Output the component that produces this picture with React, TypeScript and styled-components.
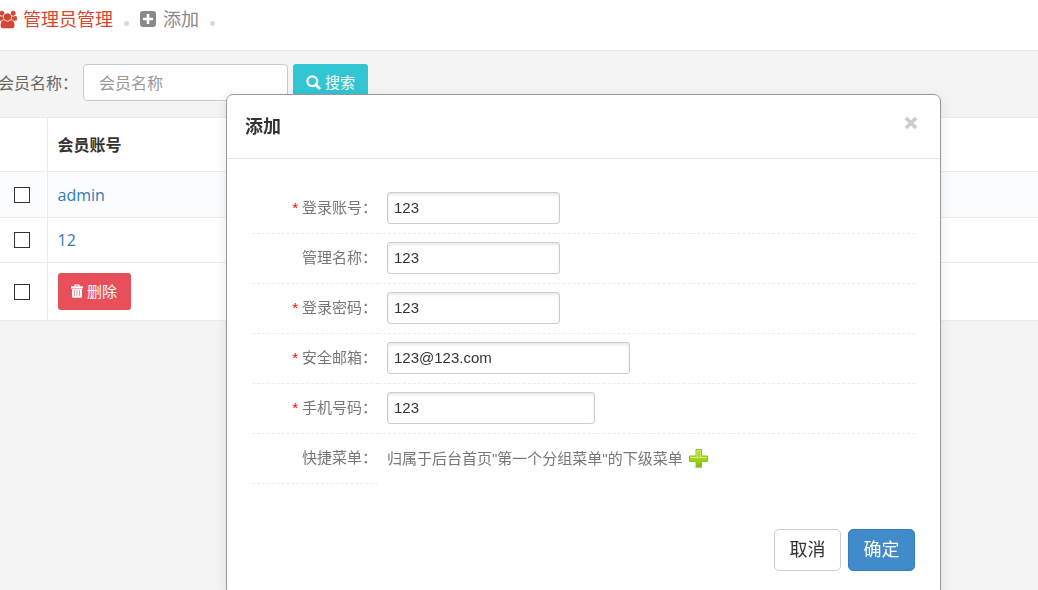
import React from 'react';
import styled, { createGlobalStyle } from 'styled-components';

const GlobalStyle = createGlobalStyle`
  *, *::before, *::after { box-sizing: border-box; }
  html, body { margin: 0; overflow: hidden; }
  body {
    background: #f4f4f4;
    color: #666;
    font: 16px/24px 'Open Sans', 'Noto Sans CJK SC', sans-serif;
  }
  button, input { font: inherit; margin: 0; }
`;

const Page = styled.div`
  margin-left: -2px;
`;

const TopBar = styled.nav`
  display: flex;
  align-items: center;
  height: 51px;
  padding-bottom: 12px;
  background: #fff;
  border-bottom: 1px solid #e3e9ee;
  font-size: 18px;
`;

const Crumb = styled.a`
  display: flex;
  align-items: center;
  gap: 7px;
  color: #888;
  text-decoration: none;
  &[aria-current] {
    gap: 6px;
    color: #d64635;
  }
`;

const Dot = styled.i`
  width: 5px;
  height: 5px;
  margin: 8px 11px 0;
  border-radius: 50%;
  background: #d9d9d9;
`;

const SearchBar = styled.form`
  display: flex;
  align-items: center;
  height: 66px;
  padding-bottom: 3px;
`;

const SearchInput = styled.input`
  width: 205px;
  height: 37px;
  margin: 0 5px;
  padding: 0 15px;
  border: 1px solid #c2cad8;
  border-radius: 4px;
  background: #fff;
  color: #555;
  &::placeholder { color: #999; opacity: 1; }
`;

const ActionButton = styled.button<{ $color: string }>`
  display: inline-flex;
  align-items: center;
  justify-content: center;
  gap: 4px;
  width: 75px;
  height: 37px;
  padding: 0 0 1px;
  border: 0;
  border-radius: 3px;
  background: ${(p) => p.$color};
  color: #fff;
  font-size: 15px;
`;

const DeleteButton = styled(ActionButton)`
  width: 73px;
`;

const Grid = styled.table`
  width: 100%;
  border-collapse: collapse;
  background: #fff;
  border-top: 1px solid #e7ecf1;
`;

const Row = styled.tr<{ $h: number; $tint?: boolean }>`
  height: ${(p) => p.$h}px;
  background: ${(p) => (p.$tint ? '#fbfcfd' : '#fff')};
  th, td {
    padding: 0 10px;
    border-bottom: 1px solid #e7ecf1;
    text-align: left;
    vertical-align: middle;
  }
  th { color: #333; font-weight: 700; }
  > :first-child {
    width: 49px;
    padding: 0 0 0 16px;
    border-right: 1px solid #e7ecf1;
  }
`;

const Tick = styled.input`
  display: block;
  appearance: none;
  width: 16px;
  height: 16px;
  border: 1px solid #333;
  background: #fff;
`;

const CellLink = styled.a`
  color: #337ab7;
  text-decoration: none;
`;

const Dialog = styled.section`
  position: fixed;
  top: 94px;
  left: 226px;
  right: 97px;
  padding-bottom: 24px;
  background: #fff;
  border: 1px solid #999;
  border-radius: 7px;
  box-shadow: 0 3px 12px rgba(0, 0, 0, 0.1);
  font-family: 'Liberation Sans', 'Noto Sans CJK SC', sans-serif;
`;

const DialogHead = styled.header`
  display: flex;
  align-items: center;
  justify-content: space-between;
  height: 64px;
  padding: 0 22px 0 18px;
  border-bottom: 1px solid #e5e5e5;
`;

const DialogTitle = styled.h4`
  margin: 0;
  color: #333;
  font-size: 18px;
  font-weight: 700;
`;

const CloseButton = styled.button`
  display: flex;
  padding: 0 0 7px;
  border: 0;
  background: none;
  color: #ccc;
`;

const Fields = styled.div`
  padding: 25px 25px 0;
  color: #777;
  font-size: 15px;
`;

const Field = styled.div`
  display: flex;
  height: 50px;
`;

const FieldLabel = styled.label`
  flex: 0 0 126px;
  display: flex;
  align-items: center;
  justify-content: flex-end;
  padding: 0 1px 2px 0;
  border-bottom: 1px dashed #ececec;
`;

const Star = styled.span`
  margin-right: 4px;
  color: #f00;
`;

const FieldBody = styled.div<{ $plain?: boolean }>`
  flex: 1;
  display: flex;
  align-items: center;
  gap: 6px;
  padding: 0 0 ${(p) => (p.$plain ? 0 : 2)}px 9px;
  border-bottom: ${(p) => (p.$plain ? '0' : '1px dashed #ececec')};
`;

const TextInput = styled.input<{ $w: number }>`
  width: ${(p) => p.$w}px;
  height: 32px;
  padding: 0 6px;
  border: 1px solid #ccc;
  border-radius: 3px;
  background: #fff;
  color: #333;
  box-shadow: inset 0 2px 3px rgba(0, 0, 0, 0.09);
`;

const PlusButton = styled.button`
  display: flex;
  padding: 0;
  border: 0;
  background: none;
`;

const DialogFoot = styled.footer`
  display: flex;
  justify-content: flex-end;
  gap: 7px;
  padding: 45px 25px 0;
`;

const FootButton = styled.button<{ $primary?: boolean }>`
  width: 67px;
  height: 42px;
  padding: 0;
  border: 1px solid ${(p) => (p.$primary ? '#357ebd' : '#ccc')};
  border-radius: 5px;
  background: ${(p) => (p.$primary ? '#428bca' : '#fff')};
  color: ${(p) => (p.$primary ? '#fff' : '#333')};
  font-size: 18px;
`;

const UsersIcon = () => (
  <svg width="19" height="19" viewBox="0 0 1920 1792" fill="currentColor" aria-hidden="true">
    <path d="M593 896q-162 5-265 128H194q-82 0-138-40.500T0 865q0-353 124-353 6 0 43.500 21t97.500 42.500T384 597q67 0 133-23-5 37-5 66 0 139 81 256zm1071 637q0 120-73 189.500t-194 69.500H523q-121 0-194-69.500T256 1533q0-53 3.500-103.500t14-109T300 1212t43-97.500 62-81 85.500-53.500T602 960q10 0 43 21.500t73 48 107 48 135 21.500 135-21.500 107-48 73-48 43-21.500q61 0 111.500 20t85.500 53.500 62 81 43 97.500 26.500 108.500 14 109 3.500 103.500zM640 256q0 106-75 181t-181 75-181-75-75-181 75-181T384 0t181 75 75 181zm704 384q0 159-112.500 271.500T960 1024 688.500 911.500 576 640t112.500-271.500T960 256t271.500 112.500T1344 640zm576 225q0 78-56 118.500t-138 40.500h-134q-103-123-265-128 81-117 81-256 0-29-5-66 66 23 133 23 59 0 119-21.500t97.500-42.500 43.500-21q124 0 124 353zm-128-609q0 106-75 181t-181 75-181-75-75-181 75-181 181-75 181 75 75 181z" />
  </svg>
);

const PlusSquareIcon = () => (
  <svg width="16" height="16" viewBox="0 0 16 16" aria-hidden="true">
    <rect width="16" height="16" rx="3" fill="currentColor" />
    <path d="M8 3v10M3 8h10" stroke="#fff" strokeWidth="2.600" />
  </svg>
);

const SearchIcon = () => (
  <svg width="15" height="15" viewBox="0 0 15 15" fill="none" stroke="currentColor" strokeWidth="2.300" aria-hidden="true">
    <circle cx="6.300" cy="6.300" r="4.900" />
    <path d="M9.800 9.800l3.500 3.500" strokeWidth="2.800" strokeLinecap="round" />
  </svg>
);

const TrashIcon = () => (
  <svg width="12" height="14" viewBox="0 0 12 14" aria-hidden="true">
    <path d="M4 2.500V1h4v1.500" fill="none" stroke="#fff" strokeWidth="1.200" />
    <path d="M0 3.200q0-1 1-1h10q1 0 1 1v1.200H0zM1 5h10v7.500q0 1.200-1.200 1.200H2.200Q1 13.700 1 12.500z" fill="#fff" />
    <path d="M3.500 6v6M6 6v6M8.500 6v6" stroke="#f0979d" strokeWidth="1" />
  </svg>
);

const CloseIcon = () => (
  <svg width="14" height="14" viewBox="0 0 14 14" stroke="currentColor" strokeWidth="3.800" aria-hidden="true">
    <path d="M2 2l10 10M12 2L2 12" />
  </svg>
);

const GreenPlusIcon = () => (
  <svg width="20" height="20" viewBox="0 0 20 20" aria-hidden="true">
    <defs>
      <linearGradient id="leaf" x1="0" y1="0" x2="0" y2="1">
        <stop offset="0" stopColor="#b5de3c" />
        <stop offset="0.550" stopColor="#a0d911" />
        <stop offset="1" stopColor="#7fb80e" />
      </linearGradient>
    </defs>
    <ellipse cx="9.500" cy="18.500" rx="5" ry="0.700" fill="#ddd" />
    <path d="M7 .500h5.500V7h6v5.500h-6v5.500H7v-5.500H.500V7H7z" fill="url(#leaf)" stroke="#8fc02a" />
    <path d="M8 8V1.500h3.500V8" fill="none" stroke="#c8e96a" />
    <path d="M1.500 8.500h16" stroke="#d3f07c" />
  </svg>
);

const accounts = [
  { name: 'admin', height: 46, tint: true },
  { name: '12', height: 45, tint: false },
];

const fields = [
  { id: 'account', label: '登录账号：', value: '123', width: 173, required: true },
  { id: 'name', label: '管理名称：', value: '123', width: 173, required: false },
  { id: 'password', label: '登录密码：', value: '123', width: 173, required: true },
  { id: 'email', label: '安全邮箱：', value: '123@123.com', width: 243, required: true },
  { id: 'phone', label: '手机号码：', value: '123', width: 208, required: true },
];

export default function App() {
  return (
    <>
      <GlobalStyle />
      <Page>
        <TopBar>
          <Crumb href="#admins" aria-current="page">
            <UsersIcon />
            管理员管理
          </Crumb>
          <Dot />
          <Crumb href="#add">
            <PlusSquareIcon />
            添加
          </Crumb>
          <Dot />
        </TopBar>
        <SearchBar onSubmit={(e) => e.preventDefault()}>
          <label htmlFor="member">会员名称：</label>
          <SearchInput id="member" placeholder="会员名称" />
          <ActionButton $color="#32c5d2">
            <SearchIcon />
            搜索
          </ActionButton>
        </SearchBar>
        <Grid>
          <thead>
            <Row $h={54}>
              <th />
              <th>会员账号</th>
            </Row>
          </thead>
          <tbody>
            {accounts.map((a) => (
              <Row key={a.name} $h={a.height} $tint={a.tint}>
                <td>
                  <Tick type="checkbox" aria-label={a.name} />
                </td>
                <td>
                  <CellLink href={`#${a.name}`}>{a.name}</CellLink>
                </td>
              </Row>
            ))}
            <Row $h={58}>
              <td>
                <Tick type="checkbox" aria-label="全选" />
              </td>
              <td>
                <DeleteButton type="button" $color="#e7505a">
                  <TrashIcon />
                  删除
                </DeleteButton>
              </td>
            </Row>
          </tbody>
        </Grid>
      </Page>

      <Dialog role="dialog" aria-labelledby="dialog-title">
        <DialogHead>
          <DialogTitle id="dialog-title">添加</DialogTitle>
          <CloseButton type="button" aria-label="关闭">
            <CloseIcon />
          </CloseButton>
        </DialogHead>
        <Fields>
          {fields.map((f) => (
            <Field key={f.id}>
              <FieldLabel htmlFor={f.id}>
                {f.required && <Star>*</Star>}
                {f.label}
              </FieldLabel>
              <FieldBody>
                <TextInput id={f.id} defaultValue={f.value} $w={f.width} />
              </FieldBody>
            </Field>
          ))}
          <Field>
            <FieldLabel htmlFor="shortcut">快捷菜单：</FieldLabel>
            <FieldBody $plain>
              <span>归属于后台首页"第一个分组菜单"的下级菜单</span>
              <PlusButton id="shortcut" type="button" aria-label="添加快捷菜单">
                <GreenPlusIcon />
              </PlusButton>
            </FieldBody>
          </Field>
        </Fields>
        <DialogFoot>
          <FootButton type="button">取消</FootButton>
          <FootButton type="button" $primary>
            确定
          </FootButton>
        </DialogFoot>
      </Dialog>
    </>
  );
}
